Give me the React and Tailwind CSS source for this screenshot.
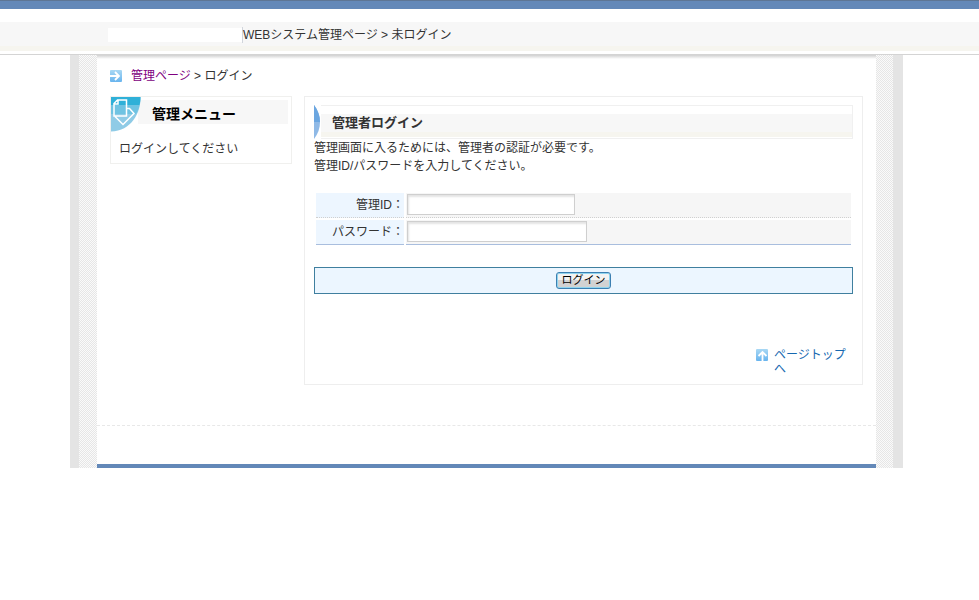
const hatch = 'bg-[repeating-conic-gradient(#e6e6e6_0%_25%,#fafafa_0%_50%)] bg-size-[2px_2px]';

const inputStyle =
    'block h-[21px] border border-[#cfcfcf] bg-white px-1 text-xs outline-none shadow-[inset_1px_2px_2px_#e4e4e4]';

function ArrowIcon({ up = false }) {
    return (
        <svg viewBox="0 0 12 12" className="size-3 shrink-0" aria-hidden="true">
            <defs>
                <linearGradient id={up ? 'arrowUp' : 'arrowRight'} x1="0" y1="0" x2="0" y2="1">
                    <stop offset="0" stopColor="#a9d8f4" />
                    <stop offset="1" stopColor="#68b4ee" />
                </linearGradient>
            </defs>
            <rect width="12" height="12" rx="1" fill={up ? 'url(#arrowUp)' : 'url(#arrowRight)'} />
            <path
                d={up ? 'M6.5 12V3.5M2.5 7L6.500 3L10.500 7' : 'M0 6h8.500M5 2L9 6L5 10'}
                fill="none"
                stroke="#fff"
                strokeWidth="1.8"
            />
        </svg>
    );
}

function MenuIcon() {
    return (
        <svg viewBox="0 0 30 35" className="h-[35px] w-[30px] shrink-0" aria-hidden="true">
            <path d="M0 0H29.5C30 16 20 34 0 34.500Z" fill="#8fcbe6" />
            <path d="M0 0H29.500C29.500 3 29.200 5.500 28.500 8H0Z" fill="#2fb0d8" />
            <path d="M0 8H28.500C27.800 11 26.800 14 25 17H0Z" fill="#6fc3e2" />
            <path
                d="M6.500 3H15.500V19H3V6.500ZM7 3.500V7H3.500M15.500 11.500H18.500L23 16.500L12 27.500L4 19.500"
                fill="none"
                stroke="#fff"
                strokeWidth="1.5"
            />
        </svg>
    );
}

function Header() {
    return (
        <header>
            <div className="h-[9px] border-t border-[#5d7594] bg-[#6388b8]" />
            <div className="mt-[13px] flex h-[29px] border-b-[5px] border-[#f6f5ef] bg-[#f7f7f7]">
                <div className="mx-auto flex w-full max-w-[839px] items-start pt-[5px] pl-[38px]">
                    <div className="mt-px h-3.5 w-[134px] bg-white" />
                    <p className="border-l border-gray-300 leading-4">WEBシステム管理ページ &gt; 未ログイン</p>
                </div>
            </div>
            <div className="mt-[3px] h-px bg-[#d4d4d4]" />
        </header>
    );
}

function SideMenu() {
    return (
        <aside className="h-[68px] w-[182px] shrink-0 border border-[#f0f0ee]">
            <div className="flex items-start bg-[linear-gradient(#f7f7f7,#f7f7f7)] bg-size-[150px_24px] bg-position-[27px_3px] bg-no-repeat">
                <MenuIcon />
                <h2 className="pt-[7px] pl-[11px] text-sm leading-5 font-bold text-black">管理メニュー</h2>
            </div>
            <p className="pt-[9px] pl-2 leading-4">ログインしてください</p>
        </aside>
    );
}

function LoginPanel() {
    return (
        <main className="flex-1 border border-[#eeeeee] px-[9px] pt-2 pb-2">
            <div className="flex h-[34px] items-stretch">
                <svg viewBox="0 0 7 34" className="w-[7px]" aria-hidden="true">
                    <path d="M0 0C8 10 8 24 0 34Z" fill="#8fb9e6" />
                    <path d="M0 0C4 5 6 11 6 17H0Z" fill="#6ba6e0" />
                </svg>
                <div className="flex-1 border border-l-0 border-[#f0f0f0] pt-2">
                    <h1 className="border-b-[5px] border-[#f6f5ef] bg-[#f7f7f7] pl-[11px] text-[13px] leading-[18px] font-bold">
                        管理者ログイン
                    </h1>
                </div>
            </div>
            <p className="leading-[18px]">
                管理画面に入るためには、管理者の認証が必要です。
                <br />
                管理ID/パスワードを入力してください。
            </p>

            <form onSubmit={(e) => e.preventDefault()}>
                <table className="mt-4 w-full border-separate border-spacing-x-0.5 border-spacing-y-0.5">
                    <tbody>
                        <tr>
                            <th className="w-[88px] border-b border-dotted border-[#d0d0d0] bg-[#edf6ff] text-right font-normal">
                                <label htmlFor="adminId">管理ID：</label>
                            </th>
                            <td className="border-b border-dotted border-[#d0d0d0] bg-[#f6f6f6] px-px pt-px pb-0.5">
                                <input id="adminId" type="text" className={`${inputStyle} w-[168px]`} />
                            </td>
                        </tr>
                        <tr>
                            <th className="border-b border-[#a9bede] bg-[#edf6ff] text-right font-normal">
                                <label htmlFor="password">パスワード：</label>
                            </th>
                            <td className="border-b border-[#a9bede] bg-[#f6f6f6] px-px pt-px pb-0.5">
                                <input id="password" type="password" className={`${inputStyle} w-[180px]`} />
                            </td>
                        </tr>
                    </tbody>
                </table>
                <div className="mt-5 flex h-[27px] items-center justify-center border border-[#3f7f9f] bg-[#ecf6ff]">
                    <button
                        type="submit"
                        className="h-[17px] w-[55px] rounded-[3px] border border-[#3c7fb1] bg-linear-to-b from-[#f3f3f3] from-50% to-[#d2d2d2] to-50% text-[11px] leading-none text-black shadow-[inset_0_0_0_1px_#8fd4ef]"
                    >
                        ログイン
                    </button>
                </div>
            </form>

            <div className="mt-[54px] flex justify-end">
                <a href="#top" className="flex w-[97px] gap-1.5 leading-[14px] text-[#1668b0]">
                    <span className="pt-px">
                        <ArrowIcon up />
                    </span>
                    <span>ページトップへ</span>
                </a>
            </div>
        </main>
    );
}

export default function App() {
    return (
        <div
            id="top"
            className="min-h-screen bg-white pr-1.5 font-['Liberation_Sans','Noto_Sans_CJK_JP',sans-serif] text-xs text-[#333333]"
        >
            <div className="-mr-1.5">
                <Header />
            </div>
            <div className="mx-auto flex w-full max-w-[833px]">
                <div className="w-[9px] bg-[#e4e4e4]" />
                <div className={`w-[18px] ${hatch}`} />
                <div className="min-w-0 flex-1 border-b-4 border-[#6388b8]">
                    <div className="h-1 bg-linear-to-b from-[#d0d0d0] to-white" />
                    <div className="px-[13px] pt-[9px]">
                        <nav className="flex items-center gap-[9px] leading-4">
                            <ArrowIcon />
                            <span>
                                <a href="#top" className="text-[#800080]">管理ページ</a> &gt; ログイン
                            </span>
                        </nav>
                        <div className="mt-3 flex items-start gap-3">
                            <SideMenu />
                            <LoginPanel />
                        </div>
                    </div>
                    <footer className="mt-10 h-[39px] border-t border-dashed border-[#e8e8e8]" />
                </div>
                <div className={`w-[17px] ${hatch}`} />
                <div className="w-[10px] bg-[#e4e4e4]" />
            </div>
        </div>
    );
}
